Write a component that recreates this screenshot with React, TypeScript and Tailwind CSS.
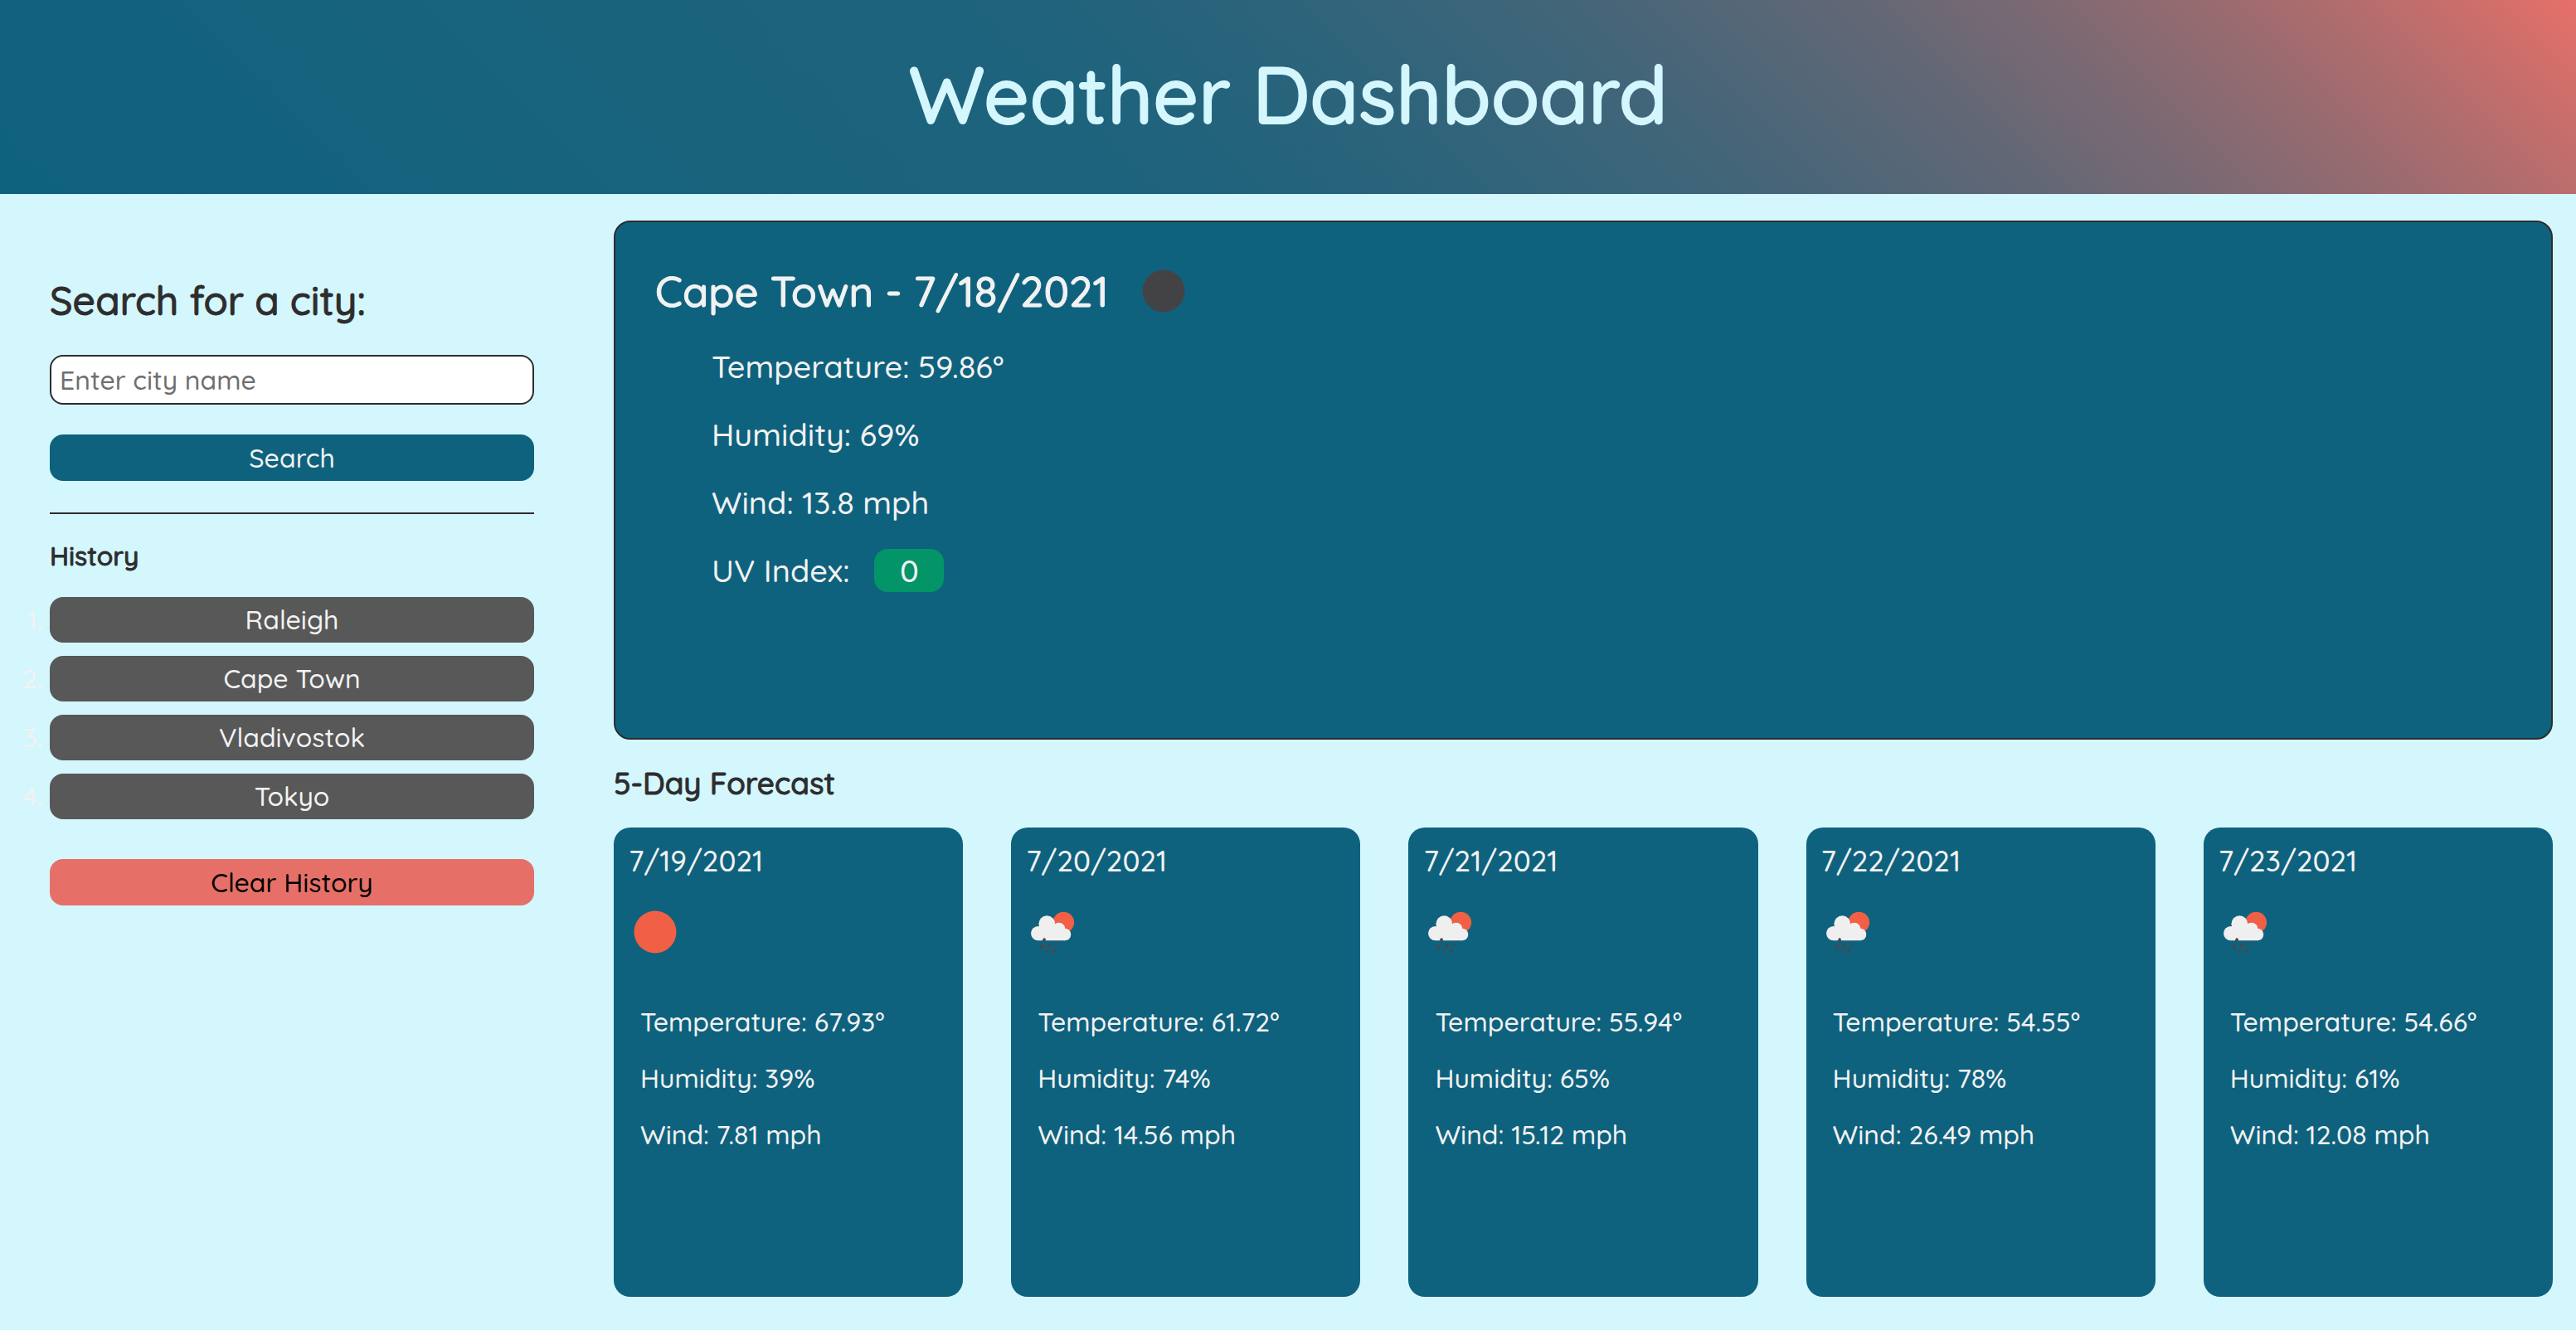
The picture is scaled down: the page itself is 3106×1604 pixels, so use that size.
import React from "react";

type Sky = "clear-night" | "clear-day" | "rain-day";

interface Reading {
  label: string;
  value: string;
}

interface ForecastDay {
  date: string;
  sky: Sky;
  temperature: string;
  humidity: string;
  wind: string;
}

const history: string[] = ["Raleigh", "Cape Town", "Vladivostok", "Tokyo"];

const current: Reading[] = [
  { label: "Temperature", value: "59.86°" },
  { label: "Humidity", value: "69%" },
  { label: "Wind", value: "13.8 mph" },
];

const forecast: ForecastDay[] = [
  { date: "7/19/2021", sky: "clear-day", temperature: "67.93°", humidity: "39%", wind: "7.81 mph" },
  { date: "7/20/2021", sky: "rain-day", temperature: "61.72°", humidity: "74%", wind: "14.56 mph" },
  { date: "7/21/2021", sky: "rain-day", temperature: "55.94°", humidity: "65%", wind: "15.12 mph" },
  { date: "7/22/2021", sky: "rain-day", temperature: "54.55°", humidity: "78%", wind: "26.49 mph" },
  { date: "7/23/2021", sky: "rain-day", temperature: "54.66°", humidity: "61%", wind: "12.08 mph" },
];

function SkyIcon({ sky }: { sky: Sky }) {
  if (sky === "rain-day") {
    return (
      <svg viewBox="0 0 100 100" className="size-[100px]" role="img" aria-label="Rain">
        <circle cx="63.3" cy="38.5" r="12.8" fill="#f15f45" />
        <g fill="#efefef">
          <circle cx="32.7" cy="51.6" r="8.7" />
          <circle cx="43.3" cy="40.2" r="9.9" />
          <circle cx="57.8" cy="46.4" r="7.7" />
          <circle cx="65" cy="53" r="7.3" />
          <path d="M32.7 45h28l4.3 6v9.3h-32.3z" />
        </g>
        <g stroke="#48484a" strokeWidth="3.6" strokeLinecap="round">
          <path d="M40.2 59.2l-.4 1" />
          <path d="M37.6 67.2l-1.2 1.8" />
          <path d="M46.2 65.7l-1 1.9" />
          <path d="M55.2 64.2l-.4 .8" strokeWidth="2.8" />
          <path d="M43.5 73.4l-.4 .6" strokeWidth="3" />
          <path d="M52.4 72.4l-.9 1.4" />
        </g>
      </svg>
    );
  }
  const night = sky === "clear-night";
  return (
    <svg
      viewBox="0 0 100 100"
      className="size-[100px]"
      role="img"
      aria-label={night ? "Clear night" : "Clear sky"}
    >
      <circle cx="50" cy="50" r="25.5" fill={night ? "#434345" : "#f15f45"} />
    </svg>
  );
}

function Sidebar() {
  return (
    <aside className="w-[644px] shrink-0 pt-[92px] pl-[60px]">
      <form onSubmit={(e) => e.preventDefault()}>
        <label
          htmlFor="city"
          className="block text-[48px] leading-[72px] [-webkit-text-stroke:1px_currentColor]"
        >
          Search for a city:
        </label>
        <input
          id="city"
          type="text"
          placeholder="Enter city name"
          className="mt-[30px] block h-[60px] w-full rounded-2xl border-2 border-[#2d2d2d] bg-white px-2.5 text-[32px] placeholder:text-[#6f6f6f]"
        />
        <button
          type="submit"
          className="mt-9 block h-14 w-full rounded-2xl bg-[#0f627e] text-[32px] leading-10 text-[#f2f2f2]"
        >
          Search
        </button>
      </form>
      <hr className="mt-[38px] border-t-2 border-[#2d2d2d]" />
      <h2 className="mt-[30px] text-[32px] leading-10 [-webkit-text-stroke:1px_currentColor]">
        History
      </h2>
      <ol className="mt-[30px] flex list-outside list-decimal flex-col gap-4 text-[32px] leading-[55px] text-[#f2f2f2]">
        {history.map((city) => (
          <li key={city}>
            <button type="button" className="block h-[55px] w-full rounded-2xl bg-[#585858]">
              {city}
            </button>
          </li>
        ))}
      </ol>
      <button
        type="button"
        className="mt-12 block h-14 w-full rounded-2xl bg-[#e67068] text-[32px] leading-10 text-black"
      >
        Clear History
      </button>
    </aside>
  );
}

function CurrentWeather() {
  return (
    <section className="h-[626px] rounded-[20px] border-2 border-[#2d2d2d] bg-[#0f627e] px-12 pt-[33px] text-[#f2f2f2]">
      <div className="flex items-center">
        <h2 className="text-[51px] leading-[100px] [-webkit-text-stroke:1px_currentColor]">
          Cape Town - 7/18/2021
        </h2>
        <div className="ml-4">
          <SkyIcon sky="clear-night" />
        </div>
      </div>
      <ul className="ml-[68px] text-[38px] leading-[82px]">
        {current.map((r) => (
          <li key={r.label}>
            {r.label}: {r.value}
          </li>
        ))}
        <li className="flex items-center">
          UV Index:
          <span className="ml-[30px] w-[84px] rounded-2xl bg-[#039468] text-center leading-[52px]">
            0
          </span>
        </li>
      </ul>
    </section>
  );
}

function ForecastCard({ day }: { day: ForecastDay }) {
  return (
    <li className="h-[566px] rounded-[20px] bg-[#0f627e] text-[#f2f2f2]">
      <h3 className="pt-[18px] pl-[18px] text-[35px] leading-11">{day.date}</h3>
      <div className="mt-3.5">
        <SkyIcon sky={day.sky} />
      </div>
      <div className="mt-6 pl-8 text-[32px] leading-[68px]">
        <p>Temperature: {day.temperature}</p>
        <p>Humidity: {day.humidity}</p>
        <p>Wind: {day.wind}</p>
      </div>
    </li>
  );
}

export default function App() {
  return (
    <div className="min-h-screen bg-[#d4f6fd] font-[Quicksand,Lato,sans-serif] font-medium text-[#2d2d2d]">
      <header className="flex h-[234px] items-center justify-center bg-[linear-gradient(45deg,#0f627e,80%,#e67068)] pb-2">
        <h1 className="text-[96px] leading-[120px] text-[#d4f6fd] [-webkit-text-stroke:2px_currentColor]">
          Weather Dashboard
        </h1>
      </header>
      <div className="flex gap-24">
        <Sidebar />
        <main className="min-w-0 flex-1 pt-8 pr-7">
          <CurrentWeather />
          <h2 className="mt-7 text-[37px] leading-12 [-webkit-text-stroke:1px_currentColor]">
            5-Day Forecast
          </h2>
          <ul className="mt-[30px] grid grid-cols-5 gap-[58px]">
            {forecast.map((day) => (
              <ForecastCard key={day.date} day={day} />
            ))}
          </ul>
        </main>
      </div>
    </div>
  );
}
